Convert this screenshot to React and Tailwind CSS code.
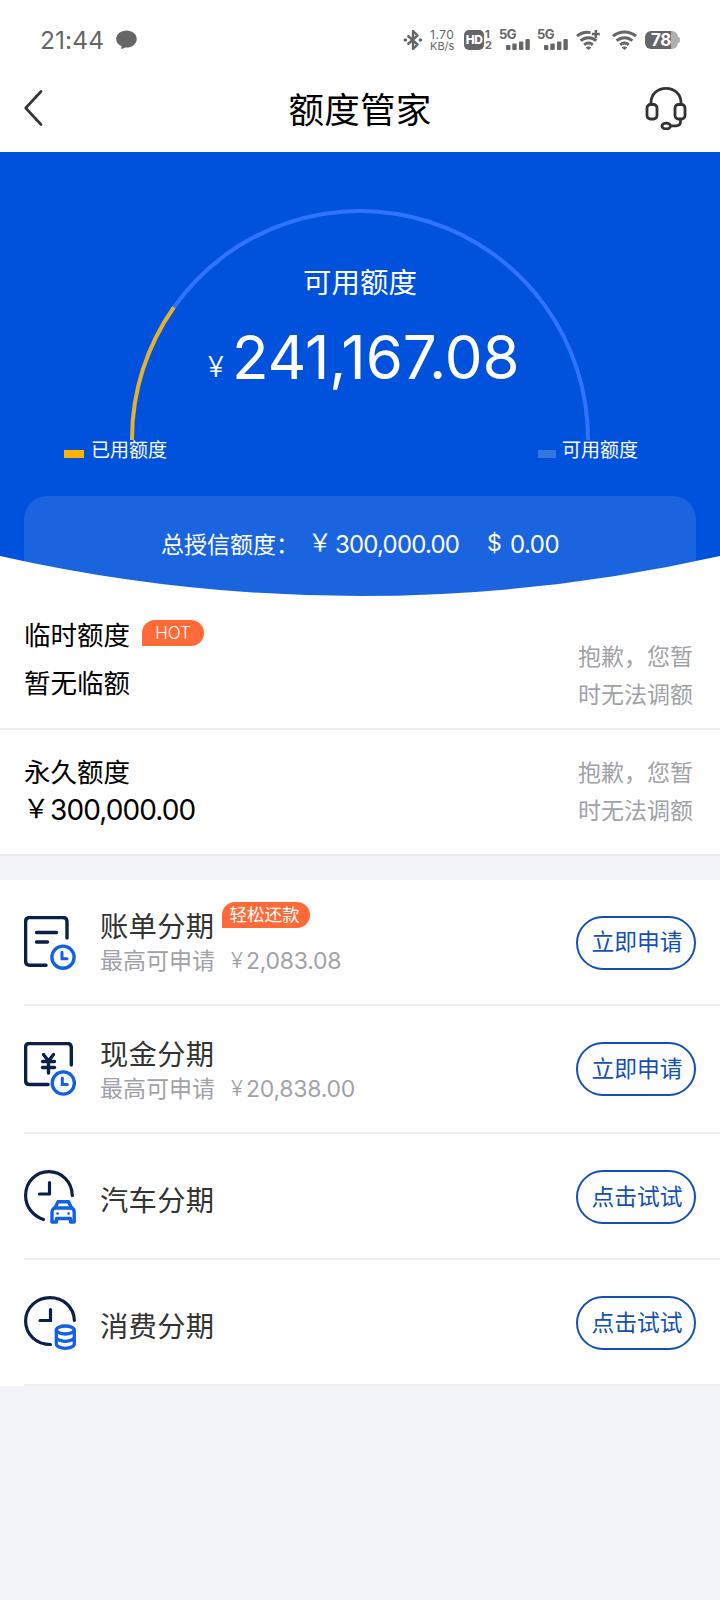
import React from "react";

const products = [
  {
    id: "bill",
    name: "账单分期",
    amount: "2,083.08",
    tag: "轻松还款",
    action: "立即申请",
    icon: BillIcon,
    height: "h-[126px] pt-px",
    shift: "-mt-0.5",
  },
  {
    id: "cash",
    name: "现金分期",
    amount: "20,838.00",
    action: "立即申请",
    icon: CashIcon,
    height: "h-[128px]",
    shift: "mt-px",
  },
  { id: "car", name: "汽车分期", action: "点击试试", icon: CarIcon, height: "h-[126px] pt-0.5", shift: "pt-2" },
  { id: "consume", name: "消费分期", action: "点击试试", icon: ConsumeIcon, height: "h-[126px] pt-0.5", shift: "pt-2" },
];

/* Status bar icons */
function BluetoothIcon() {
  return (
    <svg width="20" height="22" viewBox="0 0 20 22" fill="none" stroke="#666" strokeWidth="2.4">
      <path d="M4.5 6.5 14.5 15.5 10 20V2l4.5 4.5L4.5 15.5" strokeLinejoin="round" />
      <circle cx="2.4" cy="11" r="1.8" fill="#666" stroke="none" />
      <circle cx="17.4" cy="11" r="1.8" fill="#666" stroke="none" />
    </svg>
  );
}

function Signal() {
  return (
    <div className="flex h-5 w-[30px] flex-col">
      <span className="-ml-px h-[9px] text-[13px] leading-[9px] font-bold tracking-[-0.5px]">5G</span>
      <svg width="24" height="11" viewBox="0 0 24 11" fill="#666" className="ml-1.5">
        <rect x="0" y="6" width="4.4" height="5" rx="1" />
        <rect x="6.3" y="4.5" width="4.4" height="6.5" rx="1" />
        <rect x="13" y="2.5" width="4.4" height="8.5" rx="1" />
        <rect x="19.4" y="0" width="4.4" height="11" rx="1" />
      </svg>
    </div>
  );
}

function Wifi({ plus }) {
  return (
    <svg width="25" height="20" viewBox="0 0 25 20" fill="none" stroke="#666" strokeWidth="3">
      {plus ? (
        <>
          <path d="M1 6.2C4.6 3 9.6 1.6 14.5 2.6" />
          <path d="M19.8 0v8M15.8 4h8" strokeWidth="2.4" />
        </>
      ) : (
        <path d="M1 6.2C7.6 .6 17.4 .6 24 6.2" />
      )}
      <path d="M4.6 10.7c4.6-4 11.2-4 15.8 0" />
      <path d="M8.2 14.8c2.6-2.2 6-2.2 8.6 0" />
      <path d="M9.6 17.4c1.8-1.3 4-1.3 5.8 0L12.5 20z" fill="#666" stroke="none" />
    </svg>
  );
}

function StatusBar() {
  return (
    <div className="flex h-20 items-center pr-10 pl-10 text-[#666]">
      <span className="w-[64px] text-[24.5px] leading-6 tracking-[0.1px] whitespace-nowrap">21:44</span>
      <svg width="21" height="20" viewBox="0 0 20 20" preserveAspectRatio="none" fill="#666" className="ml-3">
        <path d="M10 .5C4.5.5.2 4.2.2 8.9c0 3.1 1.9 5.8 4.9 7.2v3.2l3.6-1.9c.4 0 .9.1 1.3.1 5.5 0 9.8-3.8 9.8-8.6S15.5.5 10 .5z" />
      </svg>

      <div className="ml-auto flex items-center">
        <BluetoothIcon />
        <div className="ml-[7px] flex w-[26px] flex-col text-[12px] leading-3 whitespace-nowrap">
          <span className="tracking-[0.5px]">1.70</span>
          <span className="text-[11px] leading-[11px]">KB/s</span>
        </div>
        <div className="ml-2 flex h-5 w-5 items-center justify-center rounded-[5px] bg-[#666] text-[12px] font-extrabold tracking-[-0.6px] text-white">
          HD
        </div>
        <div className="ml-px flex w-2 flex-col text-[11px] leading-[11px] font-bold">
          <span>1</span>
          <span>2</span>
        </div>
        <div className="ml-[7px] flex gap-2">
          <Signal />
          <Signal />
        </div>
        <div className="ml-2 flex gap-[11px]">
          <Wifi plus />
          <Wifi />
        </div>
        <div className="ml-2 flex items-center">
          <div className="flex h-[18px] w-[33px] items-center rounded-[6px] bg-linear-to-r from-[#666] from-80% to-[#b0b0b0] to-80% pl-[6px] text-[17px] leading-4 font-bold tracking-[-0.5px] text-white">
            78
          </div>
          <div className="h-[6px] w-[2px] rounded-r bg-[#b0b0b0]" />
        </div>
      </div>
    </div>
  );
}

function NavBar() {
  return (
    <div className="flex h-[72px] items-start justify-between pr-[33px] pl-6">
      <svg width="42" height="36" viewBox="0 0 42 36" fill="none" stroke="#333" strokeWidth="2.6" className="mt-[10px]">
        <path d="M17 1.5 1.7 18 17 34.5" strokeLinecap="round" strokeLinejoin="round" />
      </svg>
      <h1 className="mt-[7px] ml-[9px] text-[35.5px] leading-[48px] tracking-[0.3px] text-black">额度管家</h1>
      <svg width="42" height="44" viewBox="0 0 42 44" fill="none" stroke="#333" strokeWidth="2.8" className="mt-[6px]">
        <path d="M6 18.5v-2C6 8.2 12.7 2.3 21 2.3s15 5.9 15 14.2v2" />
        <rect x="2" y="18.5" width="10" height="14.5" rx="3.5" />
        <rect x="30" y="18.5" width="10" height="14.5" rx="3.5" />
        <path d="M35.5 33v2.5c0 3-1.5 4.3-4.5 4.3h-5.5" />
        <ellipse cx="21.2" cy="40" rx="4.3" ry="2.9" />
      </svg>
    </div>
  );
}

/* Half circle gauge: used part in yellow, rest in blue */
function Gauge({ used, total }) {
  const r = 228;
  const angle = Math.PI * (used / total);
  const x = 230 - r * Math.cos(angle);
  const y = 230 - r * Math.sin(angle);

  return (
    <div className="mx-auto grid w-[460px] pt-[57px]">
      <svg width="460" height="231" viewBox="0 0 460 231" fill="none" strokeWidth="4" className="[grid-area:1/1]">
        <path d={`M${x} ${y}A${r} ${r} 0 0 1 458 230v1`} stroke="#2f73ff" />
        <path d={`M2 231v-1A${r} ${r} 0 0 1 ${x} ${y}`} stroke="#e3b133" />
      </svg>
      <div className="flex flex-col items-center pt-[54px] text-white [grid-area:1/1]">
        <p className="text-[28.5px] leading-10">可用额度</p>
        <p className="mt-[19px] flex h-[70px] w-[310px] items-baseline whitespace-nowrap">
          <span className="w-[27px] shrink-0 -translate-y-0.5 pl-[3px] text-[29px] font-light">¥</span>
          <span className="text-[60px] leading-[70px] tracking-[-0.1px]">241,167.08</span>
        </p>
      </div>
    </div>
  );
}

function Hero() {
  return (
    <section className="relative h-[444px] overflow-hidden bg-[#0052dc]">
      <Gauge used={58832.92} total={300000} />

      <div className="flex h-5 items-center justify-between pr-[82px] pl-16 text-[19px] leading-5 text-white">
        <div className="flex items-center">
          <span className="mt-2 h-2 w-5 bg-[#ffb300]" />
          <span className="mt-0.5 ml-[7px]">已用额度</span>
        </div>
        <div className="flex items-center">
          <span className="mt-2 h-2 w-[18px] bg-[#3377e3]" />
          <span className="mt-0.5 ml-1.5">可用额度</span>
        </div>
      </div>

      <div className="mx-6 mt-9 h-[100px] rounded-t-[24px] bg-[#1a65df] pt-[34px] pl-[137px] text-white">
        <p className="flex text-[24px] leading-[30px] whitespace-nowrap">
          <span className="w-[147px] text-[23px]">总授信额度：</span>
          <span className="w-[27px] -translate-y-0.5">￥</span>
          <span className="w-[152px] tracking-[-0.8px]">300,000.00</span>
          <span className="w-[23px] -translate-y-0.5 text-[23px]">$</span>
          <span className="tracking-[-0.5px]">0.00</span>
        </p>
      </div>

      {/* curved bottom edge */}
      <svg width="720" height="41" viewBox="0 0 720 41" className="absolute bottom-0 left-0" fill="#fff">
        <path d="M0 1A1640 1640 0 0 0 720 1V41H0z" />
      </svg>
    </section>
  );
}

function Limits() {
  return (
    <>
      <section className="flex h-[134px] justify-between border-b-2 border-[#eee] bg-white pr-[27px] pl-6">
        <div className="pt-[23px] text-[26.5px] leading-8 text-black">
          <div className="flex items-center">
            <span>临时额度</span>
            <span className="-mt-1 ml-3 flex h-[26px] w-[62px] items-center justify-center rounded-[13px] rounded-bl-none bg-[#ff6a38] pb-px text-[17px] font-light text-white">
              HOT
            </span>
          </div>
          <p className="mt-4">暂无临额</p>
        </div>
        <p className="w-[115px] pt-[42px] text-[23px] leading-[38px] text-[#a0a2a8]">抱歉，您暂时无法调额</p>
      </section>

      <section className="flex h-[126px] justify-between border-b-2 border-[#eaeaee] bg-white pr-[27px] pl-6">
        <div className="pt-[26px] text-[26.5px] leading-8 text-black">
          <p>永久额度</p>
          <p className="mt-1.5 flex whitespace-nowrap">
            <span className="w-[26px] -translate-x-px -translate-y-0.5">￥</span>
            <span className="text-[28px] tracking-[-0.9px]">300,000.00</span>
          </p>
        </div>
        <p className="w-[115px] pt-6 text-[23px] leading-[38px] text-[#a0a2a8]">抱歉，您暂时无法调额</p>
      </section>
    </>
  );
}

/* Product icons */
function SmallClock({ cx, cy }) {
  return (
    <g stroke="#1260e6" strokeWidth="3.4">
      <circle cx={cx} cy={cy} r="11.1" />
      <path d={`M${cx - 1} ${cy - 5}v6.5h5`} strokeWidth="3" />
    </g>
  );
}

function BillIcon() {
  return (
    <svg width="52" height="54" viewBox="0 0 52 54" fill="none" strokeLinecap="round">
      <g stroke="#0a2047" strokeWidth="3.4">
        <path d="M43 22V5.6c0-2.5-1.5-4-4-4H5.6c-2.5 0-4 1.5-4 4v39.6c0 2.5 1.5 4 4 4H22" />
        <path d="M12.5 16.5h20M12.5 26h11" />
      </g>
      <SmallClock cx={39} cy={41.2} />
    </svg>
  );
}

function CashIcon() {
  return (
    <svg width="52" height="54" viewBox="0 0 52 54" fill="none" strokeLinecap="round">
      <g stroke="#0a2047" strokeWidth="3.4">
        <path d="M47.3 23V5.5c0-2.5-1.5-4-4-4h-38c-2.5 0-3.7 1.5-3.7 4v33c0 2.5 1.5 4 4 4H24" />
        <path d="m19.5 12.5 5 6.5 5-6.5M18.5 19.5h12M18.5 25.5h12M24.5 19.5V31" />
      </g>
      <SmallClock cx={39.3} cy={41} />
    </svg>
  );
}

function CarIcon() {
  return (
    <svg width="52" height="54" viewBox="0 0 52 54" fill="none" strokeLinecap="round" strokeLinejoin="round">
      <g stroke="#0a2047" strokeWidth="3.2">
        <path d="M48.3 25.5C48 11.5 37.5 1.6 24.8 1.6 12 1.6 1.6 12 1.6 25.5c0 11 7 20.5 17.9 24" />
        <path d="M25.5 12.5V24H15.5" />
      </g>
      <g stroke="#1260e6" strokeWidth="3.4">
        <path d="m31 38 3-6.3h10.5l3 6.3" />
        <path d="M30 38h18c1.5 1 2.2 2.3 2.2 4v10H46.5v-3.5h-14V52h-4.5V42c0-1.7.7-3 2-4z" />
        <path d="M33.5 43.5h.2M44.5 43.5h.2" strokeWidth="2.6" />
      </g>
    </svg>
  );
}

function ConsumeIcon() {
  return (
    <svg width="52" height="54" viewBox="0 0 52 54" fill="none" strokeLinecap="round">
      <g stroke="#0a2047" strokeWidth="3.2">
        <path d="M50.4 24.5C50 11 39 1.6 26 1.6 12.5 1.6 1.6 12 1.6 25c0 13.5 10.9 23.5 24.9 23.5" />
        <path d="M26.5 13.5V24.5H16" />
      </g>
      <g stroke="#1260e6" strokeWidth="3.3">
        <ellipse cx="41.3" cy="34" rx="9" ry="4" />
        <path d="M32.3 34v14c0 2.4 4 4.3 9 4.3s9-1.9 9-4.3V34M32.3 41c0 2.4 4 4.3 9 4.3s9-1.9 9-4.3" />
      </g>
    </svg>
  );
}

function ProductRow({ item }) {
  const Icon = item.icon;

  return (
    <li className={`${item.height} flex items-center border-b-2 border-[#ececec] pr-6`}>
      <Icon />
      <div className={`${item.shift} ml-6 text-[28.3px] leading-9 text-[#333]`}>
        <div className="flex">
          <span className={item.amount ? "mt-0.5 -mb-0.5 tracking-[0.3px]" : "tracking-[0.3px]"}>{item.name}</span>
          {item.tag && (
            <span className="-mt-[5px] ml-2 flex h-[26px] w-[88px] items-center justify-center rounded-[13px] rounded-bl-none bg-[#ff6a38] pr-1 text-[17.5px] text-white">
              {item.tag}
            </span>
          )}
        </div>
        {item.amount && (
          <p className="mt-px -mb-px flex text-[23px] leading-[34px] text-[#a0a2a8]">
            <span>最高可申请</span>
            <span className="ml-4 w-[15px] -translate-y-px text-[22px] font-light">¥</span>
            <span className="tracking-[-0.25px]">{item.amount}</span>
          </p>
        )}
      </div>
      <button className="ml-auto h-[54px] w-[120px] rounded-full border-2 border-[#1450b4] pb-px pl-0.5 text-[22.8px] leading-8 whitespace-nowrap text-[#1450b4]">
        {item.action}
      </button>
    </li>
  );
}

export default function App() {
  return (
    <div className="flex h-[1600px] w-[720px] flex-col overflow-hidden bg-[#f3f4f9] font-['Inter','Noto_Sans_CJK_SC',sans-serif]">
      <header className="bg-white">
        <StatusBar />
        <NavBar />
      </header>
      <Hero />
      <Limits />
      <ul className="mt-6 bg-white pl-6">
        {products.map((item) => (
          <ProductRow key={item.id} item={item} />
        ))}
      </ul>
    </div>
  );
}
